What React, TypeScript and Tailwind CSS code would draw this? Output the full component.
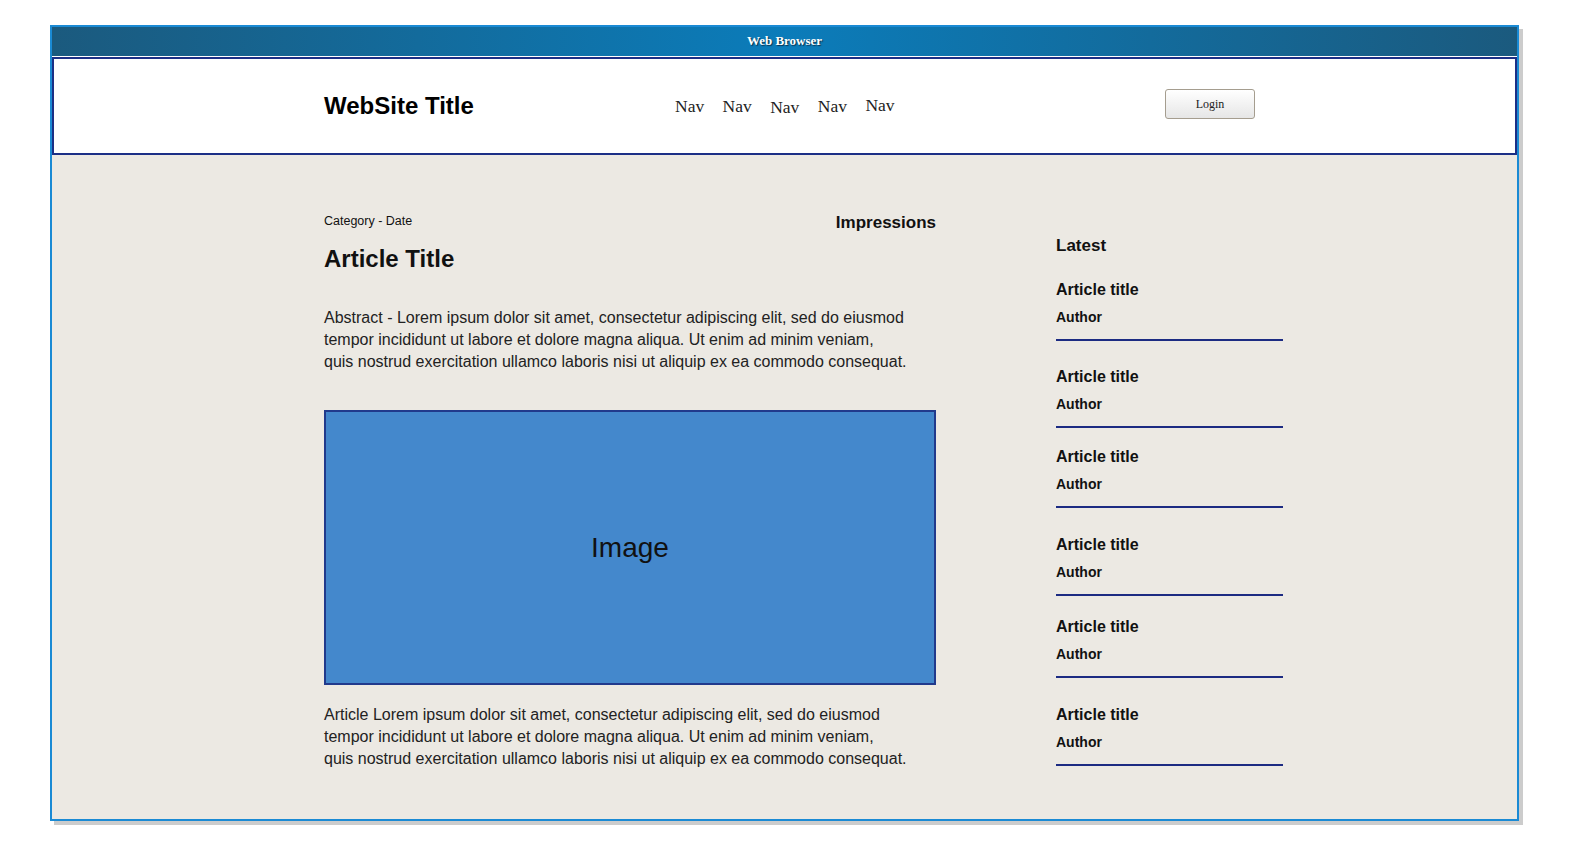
import React from "react";

const navItems = [
  { label: "Nav", cls: "w-[29px]" },
  { label: "Nav", cls: "w-[29px]" },
  { label: "Nav", cls: "w-[29px] mt-[3px]" },
  { label: "Nav", cls: "w-[29px] mt-[1px]" },
  { label: "Nav", cls: "w-[29px] -mt-[2px]" },
];

// top spacing before each item in the "Latest" list
const latestGaps = ["mt-[24px]", "mt-[26px]", "mt-[19px]", "mt-[27px]", "mt-[21px]", "mt-[27px]"];

function LatestItem({ gap }: { gap: string }) {
  return (
    <div className={gap}>
      <div className="text-[16px] leading-[20px] font-bold text-[#111]">Article title</div>
      <div className="mt-[8px] text-[14px] leading-[18px] font-bold text-[#111]">Author</div>
      <div className="mt-[13px] h-[2px] w-[227px] bg-[#1c2b82]" />
    </div>
  );
}

export default function App() {
  return (
    <div className="min-h-screen bg-white pl-[50px] pt-[25px] font-['Liberation_Sans',Arial,sans-serif]">
      <div className="w-[1469px] border-2 border-[#1a8ad4] bg-white shadow-[4px_4px_0_#cccccc]">
        {/* Title bar */}
        <div className="flex h-[29px] items-center justify-center bg-[linear-gradient(to_right,#1b5a7e,#0b7cba_50%,#1b5a7e)]">
          <span className="-mt-px font-['Liberation_Serif',serif] text-[13px] font-bold text-white [text-shadow:1px_1px_1px_#0a3350]">
            Web Browser
          </span>
        </div>

        {/* Site header */}
        <div className="mt-px flex h-[98px] items-center border-2 border-[#1c2f86] bg-white pl-[270px]">
          <div className="w-[351px] text-[24px] font-bold text-black">WebSite Title</div>
          <nav className="flex w-[490px] items-center gap-[18.6px] font-['Liberation_Serif',serif] text-[17.5px] text-[#222]">
            {navItems.map((n, i) => (
              <span key={i} className={n.cls}>
                {n.label}
              </span>
            ))}
          </nav>
          <button className="-mt-[4px] h-[30px] w-[90px] rounded-[3px] border border-[#a59d8f] bg-[linear-gradient(to_bottom,#ffffff,#e6e6e6)] font-['Liberation_Serif',serif] text-[12px] text-[#222]">
            Login
          </button>
        </div>

        {/* Page content */}
        <div className="flex h-[664px] items-start bg-[#ece9e3] pl-[272px]">
          <div className="w-[612px] pt-[59px]">
            <div className="flex items-start justify-between">
              <span className="text-[12.5px] leading-[15px] text-[#111]">Category - Date</span>
              <span className="-mt-px text-[17px] leading-[20px] font-bold text-[#111]">Impressions</span>
            </div>
            <h1 className="mt-[12px] text-[24px] leading-[28px] font-bold text-[#111]">Article Title</h1>
            <p className="mt-[34px] text-[16px] leading-[22px] text-[#222]">
              Abstract - Lorem ipsum dolor sit amet, consectetur adipiscing elit, sed do eiusmod
              <br />
              tempor incididunt ut labore et dolore magna aliqua. Ut enim ad minim veniam,
              <br />
              quis nostrud exercitation ullamco laboris nisi ut aliquip ex ea commodo consequat.
            </p>
            <div className="mt-[37px] flex h-[275px] items-center justify-center border-2 border-[#213a8c] bg-[#4488cc]">
              <span className="text-[28px] text-[#111]">Image</span>
            </div>
            <p className="mt-[19px] text-[16px] leading-[22px] text-[#222]">
              Article Lorem ipsum dolor sit amet, consectetur adipiscing elit, sed do eiusmod
              <br />
              tempor incididunt ut labore et dolore magna aliqua. Ut enim ad minim veniam,
              <br />
              quis nostrud exercitation ullamco laboris nisi ut aliquip ex ea commodo consequat.
            </p>
          </div>

          <aside className="ml-[120px] w-[227px] pt-[81px]">
            <div className="text-[17px] leading-[20px] font-bold text-[#111]">Latest</div>
            {latestGaps.map((g, i) => (
              <LatestItem key={i} gap={g} />
            ))}
          </aside>
        </div>
      </div>
    </div>
  );
}
